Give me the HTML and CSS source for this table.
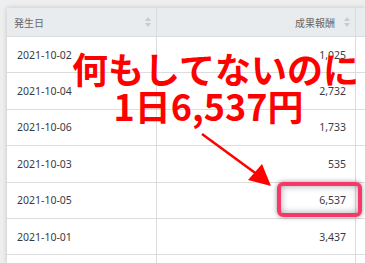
FILE: index.html
```html
<!DOCTYPE html>
<html lang="ja">
<head>
<meta charset="utf-8">
<link rel="stylesheet" href="styles.css">
</head>
<body>
<div class="page">
  <div class="table">
    <div class="row head">
      <div class="cell c1">発生日<span class="sort"></span></div>
      <div class="cell c2 num">成果報酬<span class="sort"></span></div>
      <div class="cell c3"></div>
    </div>
    <div class="row"><div class="cell c1">2021-10-02</div><div class="cell c2 num">1,025</div><div class="cell c3"></div></div>
    <div class="row"><div class="cell c1">2021-10-04</div><div class="cell c2 num">2,732</div><div class="cell c3"></div></div>
    <div class="row"><div class="cell c1">2021-10-06</div><div class="cell c2 num">1,733</div><div class="cell c3"></div></div>
    <div class="row"><div class="cell c1">2021-10-03</div><div class="cell c2 num">535</div><div class="cell c3"></div></div>
    <div class="row"><div class="cell c1">2021-10-05</div><div class="cell c2 num">6,537</div><div class="cell c3"></div></div>
    <div class="row"><div class="cell c1">2021-10-01</div><div class="cell c2 num">3,437</div><div class="cell c3"></div></div>
    <div class="row last"><div class="cell c1"></div><div class="cell c2 num"></div><div class="cell c3"></div></div>
  </div>
</div>
<div class="caption">
  <div class="line1">何もしてないのに</div>
  <div class="line2">1日6,537円</div>
</div>
<svg class="arrow" width="365" height="263" viewBox="0 0 365 263">
  <line x1="202" y1="134" x2="258" y2="175" stroke="#ff0000" stroke-width="2.5"/>
  <polygon points="271,186 248,180 262,164" fill="#ff0000"/>
</svg>
<div class="highlight"></div>
</body>
</html>
```

FILE: styles.css
```css
html, body {
  margin: 0;
  padding: 0;
}
body {
  width: 365px;
  height: 263px;
  overflow: hidden;
  background: #eeeeee;
  font-family: "Noto Sans", "Noto Sans CJK JP", sans-serif;
  position: relative;
}
.page {
  padding: 8px 0 0 7px;
  height: 263px;
  box-sizing: border-box;
  overflow: hidden;
}
.table {
  width: 358px;
  background: #ffffff;
  box-shadow: 0 0 5px rgba(0,0,0,0.18);
}
.row {
  display: flex;
  height: 36.4px;
  box-sizing: border-box;
  border-bottom: 1px solid #dcdcdc;
  color: #3a3a44;
  font-size: 10.5px;
}
.row.last {
  height: 9px;
  border-bottom: 0;
}
.row.head {
  height: 29px;
  background: #e9ecef;
  color: #666;
  font-size: 10px;
  font-family: "Noto Sans CJK JP", sans-serif;
}
.cell {
  display: flex;
  align-items: center;
  box-sizing: border-box;
  position: relative;
}
.c1 {
  width: 150px;
  padding-left: 10px;
  border-right: 1px solid #dcdcdc;
}
.head .c1 { padding-left: 7px; }
.c2 {
  width: 199px;
  justify-content: flex-end;
  padding-right: 9px;
  border-right: 1px solid #dcdcdc;
}
.head .c2 { padding-right: 20px; }
.c3 { flex: 1; }
.sort {
  position: absolute;
  right: 4px;
  top: 9px;
  width: 8px;
  height: 11px;
}
.sort::before, .sort::after {
  content: "";
  position: absolute;
  left: 1px;
  border-left: 3px solid transparent;
  border-right: 3px solid transparent;
}
.sort::before {
  top: 0;
  border-bottom: 4px solid #c8cbcf;
}
.sort::after {
  top: 6px;
  border-top: 4px solid #c8cbcf;
}
.caption {
  position: absolute;
  left: 60px;
  top: 50px;
  width: 305px;
  text-align: center;
  color: #ff0000;
  font-family: "Noto Sans CJK JP", sans-serif;
  font-weight: 700;
  font-size: 36px;
  line-height: 37px;
}
.line1 { padding-left: 6px; }
.line2 { padding-right: 8px; }
.arrow {
  position: absolute;
  left: 0;
  top: 0;
}
.highlight {
  position: absolute;
  left: 277px;
  top: 182px;
  width: 77px;
  height: 27px;
  border: 4px solid #f7386a;
  border-radius: 6px;
  box-shadow: 0 0 5px rgba(0,0,0,0.4), inset 0 0 7px rgba(0,0,0,0.35);
}
```
